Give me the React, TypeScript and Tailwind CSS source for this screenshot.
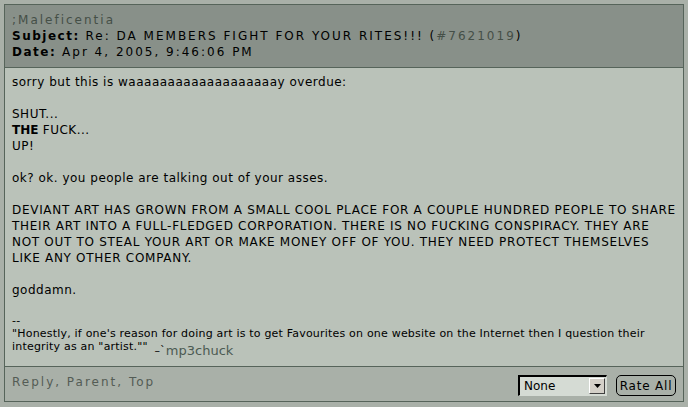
import React from 'react';

export default function App() {
    const font = { fontFamily: '"DejaVu Sans", Verdana, sans-serif' };
    return (
        <div className="w-[688px] h-[407px] bg-[#a9b0a8] p-[4px] overflow-hidden" style={font}>
            <div className="w-[680px] h-[398px] border border-[#56645a] flex flex-col">
                <div className="h-[63px] bg-[#889089] border-b border-[#56645a] px-[7px] pt-[7px] text-[12px] leading-[16px] tracking-[2px] text-black">
                    <div className="text-[#454f47]">;Maleficentia</div>
                    <div>
                        <b className="tracking-[1.5px]">Subject:</b> Re: DA MEMBERS FIGHT FOR YOUR RITES!!! (<span className="text-[#454f47]">#7621019</span>)
                    </div>
                    <div>
                        <b className="tracking-[1.5px]">Date:</b> Apr 4, 2005, 9:46:06 PM
                    </div>
                </div>
                <div className="h-[299px] bg-[#bac2b9] border-b border-[#56645a] px-[7px] pt-[6px] text-[12px] leading-[16px] tracking-[0.5px] text-black">
                    <p>sorry but this is waaaaaaaaaaaaaaaaaaay overdue:</p>
                    <p className="mt-[16px]">SHUT...</p>
                    <p><b className="tracking-normal">THE</b> FUCK...</p>
                    <p>UP!</p>
                    <p className="mt-[16px]">ok? ok. you people are talking out of your asses.</p>
                    <p className="mt-[16px] tracking-[0.7px]">
                        DEVIANT ART HAS GROWN FROM A SMALL COOL PLACE FOR A COUPLE HUNDRED PEOPLE TO SHARE<br />
                        THEIR ART INTO A FULL-FLEDGED CORPORATION. THERE IS NO FUCKING CONSPIRACY. THEY ARE<br />
                        NOT OUT TO STEAL YOUR ART OR MAKE MONEY OFF OF YOU. THEY NEED PROTECT THEMSELVES<br />
                        LIKE ANY OTHER COMPANY.
                    </p>
                    <p className="mt-[16px]">goddamn.</p>
                    <div className="mt-[16px] text-[11px] leading-[13px] tracking-[0.2px]">
                        <p>--</p>
                        <p>
                            "Honestly, if one's reason for doing art is to get Favourites on one website on the Internet then I question their integrity as an "artist."" <span className="ml-[3px] align-[-4px]">–`</span><span className="text-[13px] leading-[13px] text-[#4c5a52] tracking-normal align-[-5px]">mp3chuck</span>
                        </p>
                    </div>
                </div>
                <div className="flex-1 bg-[#a9b0a8] flex items-start justify-between px-[7px] pt-[7px]">
                    <div className="text-[12px] tracking-[2px] text-[#545c55] leading-[16px]">Reply, Parent, Top</div>
                    <div className="flex items-center gap-[9px] mt-[1px]">
                        <div className="w-[89px] h-[21px] bg-[#d5dbd4] border-l-2 border-t-2 border-black border-r border-b border-r-[#d5dbd4] border-b-[#d5dbd4] flex items-center justify-between pl-[4px] pr-[1px]">
                            <span className="text-[12px] text-black">None</span>
                            <div className="w-[16px] h-[16px] bg-[#d4d0c8] border border-t-white border-l-white border-r-[#404040] border-b-[#404040] flex items-center justify-center">
                                <svg width="7" height="4" viewBox="0 0 7 4"><path d="M0 0h7L3.5 4z" fill="#000" /></svg>
                            </div>
                        </div>
                        <button className="h-[21px] w-[60px] rounded-[5px] border border-black text-[12px] text-black bg-transparent leading-[18px] tracking-[0.8px]">Rate All</button>
                    </div>
                </div>
            </div>
        </div>
    );
}
